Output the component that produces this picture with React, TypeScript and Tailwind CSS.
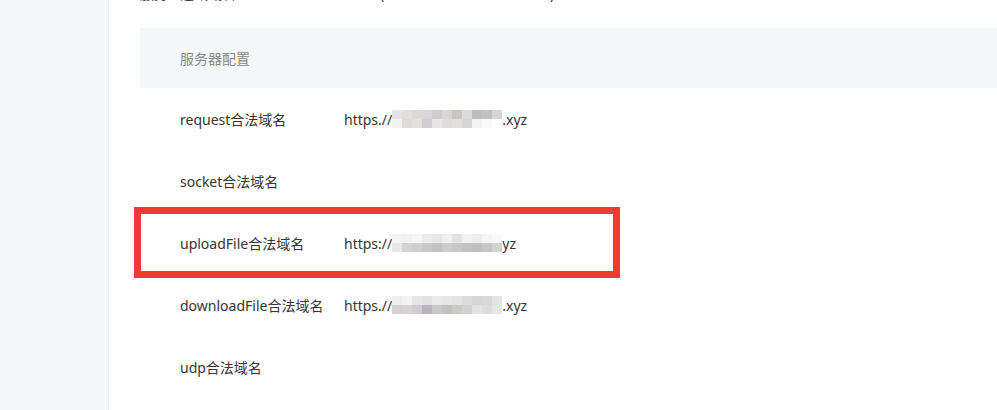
import React from 'react';

type Row = { label: string; prefix?: string; suffix?: string; tiles?: string[][] };

const rows: Row[] = [
  {
    label: 'request合法域名',
    prefix: 'https.//',
    suffix: '.xyz',
    tiles: [
      ['#e4e4e6', '#e0dfdd', '#dcdad8', '#dbd7db', '#cfcbd0', '#d8d6d2', '#c9c6c2', '#dcdadc', '#bebdbe', '#c2c1c1', '#d6d6d6'],
      ['#f2f2f2', '#dedcd9', '#e3e1df', '#d0ccd2', '#e7e6e7', '#dddddd', '#e1e0df', '#d7d6d7', '#f3f3f3', '#fafafa', '#ffffff'],
    ],
  },
  { label: 'socket合法域名' },
  {
    label: 'uploadFile合法域名',
    prefix: 'https://',
    suffix: 'yz',
    tiles: [
      ['#f4f4f4', '#f2f2f2', '#f6f6f6', '#ececec', '#e8e8e8', '#f0f0f0', '#e3e3e3', '#f1f1f1', '#eeeeee', '#f5f5f5', '#f9f9f9'],
      ['#e7e7e7', '#d4d4d4', '#cfcfcf', '#c9c8c9', '#c4c3c4', '#cdcdcd', '#c8c8c8', '#c3c3c3', '#bfbfbf', '#c6c6c6', '#d3d3d3'],
    ],
  },
  {
    label: 'downloadFile合法域名',
    prefix: 'https.//',
    suffix: '.xyz',
    tiles: [
      ['#ededed', '#f2f2f2', '#e6e6e6', '#e2e2e2', '#eaeaea', '#e7e7e7', '#e4e4e4', '#dcdcdc', '#d6d6d6', '#d9d9d9', '#e4e4e4'],
      ['#d3d3d3', '#d6d4d2', '#cfcccf', '#b9b4bd', '#cbc5cd', '#c2c2c0', '#cbcac9', '#d1d1d1', '#e2e2e2', '#dcdcdc', '#e6e6e6'],
    ],
  },
  { label: 'udp合法域名' },
];

function Mosaic({ tiles }: { tiles: string[][] }) {
  return (
    <span className="inline-flex flex-col align-middle">
      {tiles.map((line, i) => (
        <span key={i} className="flex">
          {line.map((c, j) => (
            <span key={j} className="block w-[10px] h-[9px]" style={{ backgroundColor: c }} />
          ))}
        </span>
      ))}
    </span>
  );
}

export default function App() {
  return (
    <div
      className="flex w-[997px] h-[410px] overflow-hidden bg-white text-[14px] text-[#353535]"
      style={{ fontFamily: '"Noto Sans", "Noto Sans CJK SC", sans-serif' }}
    >
      {/* sidebar */}
      <div className="w-[109px] shrink-0 bg-[#f6f7f9] border-r border-[#eceef1]" />

      <div className="flex-1 pl-[31px]">
        {/* row cut off at the top edge */}
        <div className="h-[28px] overflow-hidden">
          <div className="-mt-[16px] flex items-center leading-[20px] text-[#353535]">
            <span className="w-[40px]">服务</span>
            <span className="w-[200px]">通讯域名</span>
            <span className="w-[170px]">(</span>
            <span>)</span>
          </div>
        </div>

        <div className="h-[60px] bg-[#f6f7f9] flex items-center pl-[40px] text-[#8a8a8a]">
          服务器配置
        </div>

        {rows.map((row, i) => (
          <div key={i} className="relative h-[62px] flex items-center pl-[40px]">
            <span className="w-[164px] shrink-0">{row.label}</span>
            {row.prefix && (
              <span className="flex items-center">
                <span>{row.prefix}</span>
                {row.tiles && <Mosaic tiles={row.tiles} />}
                <span>{row.suffix}</span>
              </span>
            )}
            {i === 2 && (
              <div className="absolute -top-[5px] -left-[6px] w-[486px] h-[71px] border-[7px] border-[#f4393b]" />
            )}
          </div>
        ))}
      </div>
    </div>
  );
}
